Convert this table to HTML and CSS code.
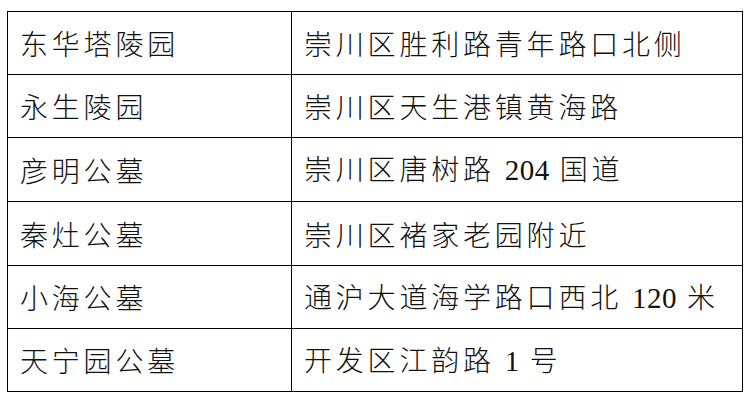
FILE: index.html
```html
<!DOCTYPE html>
<html lang="zh-CN">
<head>
<meta charset="utf-8">
<title>陵园公墓</title>
<link rel="stylesheet" href="styles.css">
</head>
<body>
<table class="list">
  <tr><td class="name">东华塔陵园</td><td class="addr">崇川区胜利路青年路口北侧</td></tr>
  <tr><td class="name">永生陵园</td><td class="addr">崇川区天生港镇黄海路</td></tr>
  <tr class="tall"><td class="name">彦明公墓</td><td class="addr">崇川区唐树路 <span class="num">204</span> 国道</td></tr>
  <tr class="tall"><td class="name">秦灶公墓</td><td class="addr">崇川区褚家老园附近</td></tr>
  <tr><td class="name">小海公墓</td><td class="addr">通沪大道海学路口西北 <span class="num">120</span> 米</td></tr>
  <tr><td class="name">天宁园公墓</td><td class="addr">开发区江韵路 <span class="num">1</span> 号</td></tr>
</table>
</body>
</html>
```

FILE: styles.css
```css
html, body {
  margin: 0;
  padding: 0;
  background: #fff;
}

.list {
  margin: 11px 0 0 7px;
  width: 736px;
  border-collapse: collapse;
  table-layout: fixed;
  font-family: "Noto Sans CJK SC", sans-serif;
  font-weight: 300;
  font-size: 28px;
  letter-spacing: 3.8px;
  color: #111;
}

.list td {
  border: 1px solid #000;
  height: 62px;
  padding: 0 0 0 12px;
  line-height: 1;
  vertical-align: middle;
  white-space: nowrap;
}

.list .tall td {
  height: 63px;
}

.list .name {
  width: 284px;
  box-sizing: border-box;
}

.list .num {
  font-family: "Liberation Serif", "Times New Roman", serif;
  font-weight: 400;
  font-size: 29px;
  letter-spacing: 0.5px;
}
```
